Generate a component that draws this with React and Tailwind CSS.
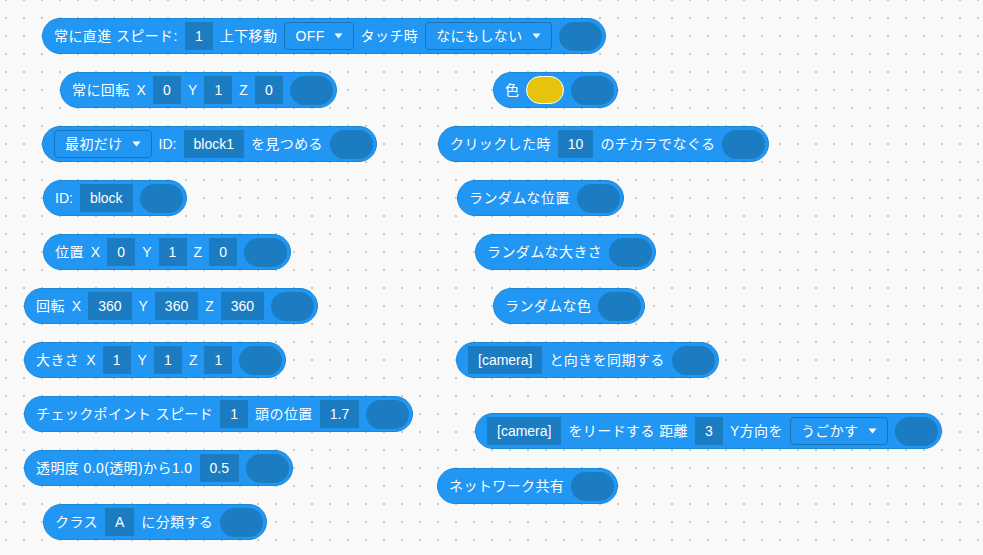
import React from 'react'

// ドロップダウンの小さな三角
function Caret() {
  return (
    <svg width="9" height="6" viewBox="0 0 9 6" className="shrink-0">
      <path d="M0.5 0.5 L8.5 0.5 L4.5 5.5 Z" fill="#ffffff" />
    </svg>
  )
}

// ラベル文字（日本語は少しだけ字間を広げる）
function T({ children }) {
  return <span className="tracking-[0.4px]">{children}</span>
}

function Input({ children }) {
  return (
    <span className="flex h-[28px] min-w-[28px] items-center justify-center bg-[#1b7cc2] px-[10px]">
      {children}
    </span>
  )
}

function Dropdown({ children }) {
  return (
    <span className="flex h-[28px] items-center gap-[9px] rounded-[4px] border border-[#1a74b6] px-[10px]">
      <T>{children}</T>
      <Caret />
    </span>
  )
}

function Toggle() {
  return <span className="ml-auto h-[29px] w-[43px] shrink-0 rounded-full bg-[#1b7cc2]" />
}

function Block({ className, children }) {
  return (
    <div
      className={`absolute flex h-[36px] items-center gap-[7px] whitespace-nowrap rounded-full border border-[#1c88d8] bg-[#2196f3] pl-[11px] pr-[3px] text-[14px] text-white ${className}`}
    >
      {children}
      <Toggle />
    </div>
  )
}

export default function App() {
  return (
    <div
      className="relative h-[555px] w-[983px] overflow-hidden bg-[#f9f9f9] bg-[radial-gradient(circle,#c9c9c9_1px,transparent_1.2px)] bg-[length:18px_18px] bg-[position:-3px_-9px]"
      style={{ fontFamily: '"Liberation Sans", "Noto Sans CJK JP", sans-serif' }}
    >
      {/* 左の列 */}
      <Block className="left-[42px] top-[18px]">
        <T>常に直進 スピード:</T>
        <Input>1</Input>
        <T>上下移動</T>
        <Dropdown>OFF</Dropdown>
        <T>タッチ時</T>
        <Dropdown>なにもしない</Dropdown>
      </Block>

      <Block className="left-[60px] top-[72px]">
        <T>常に回転</T>
        <span>X</span>
        <Input>0</Input>
        <span>Y</span>
        <Input>1</Input>
        <span>Z</span>
        <Input>0</Input>
      </Block>

      <Block className="left-[42px] top-[126px]">
        <Dropdown>最初だけ</Dropdown>
        <span>ID:</span>
        <Input>block1</Input>
        <T>を見つめる</T>
      </Block>

      <Block className="left-[43px] top-[180px]">
        <span>ID:</span>
        <Input>block</Input>
      </Block>

      <Block className="left-[43px] top-[234px]">
        <T>位置</T>
        <span>X</span>
        <Input>0</Input>
        <span>Y</span>
        <Input>1</Input>
        <span>Z</span>
        <Input>0</Input>
      </Block>

      <Block className="left-[24px] top-[288px]">
        <T>回転</T>
        <span>X</span>
        <Input>360</Input>
        <span>Y</span>
        <Input>360</Input>
        <span>Z</span>
        <Input>360</Input>
      </Block>

      <Block className="left-[24px] top-[342px]">
        <T>大きさ</T>
        <span>X</span>
        <Input>1</Input>
        <span>Y</span>
        <Input>1</Input>
        <span>Z</span>
        <Input>1</Input>
      </Block>

      <Block className="left-[24px] top-[396px]">
        <T>チェックポイント スピード</T>
        <Input>1</Input>
        <T>頭の位置</T>
        <Input>1.7</Input>
      </Block>

      <Block className="left-[24px] top-[450px]">
        <T>透明度 0.0(透明)から1.0</T>
        <Input>0.5</Input>
      </Block>

      <Block className="left-[43px] top-[504px]">
        <T>クラス</T>
        <Input>A</Input>
        <T>に分類する</T>
      </Block>

      {/* 右の列 */}
      <Block className="left-[493px] top-[72px]">
        <T>色</T>
        <span className="h-[28px] w-[38px] rounded-full border border-white bg-[#e6c30c]" />
      </Block>

      <Block className="left-[438px] top-[126px]">
        <T>クリックした時</T>
        <Input>10</Input>
        <T>のチカラでなぐる</T>
      </Block>

      <Block className="left-[457px] top-[180px]">
        <T>ランダムな位置</T>
      </Block>

      <Block className="left-[475px] top-[234px]">
        <T>ランダムな大きさ</T>
      </Block>

      <Block className="left-[493px] top-[288px]">
        <T>ランダムな色</T>
      </Block>

      <Block className="left-[456px] top-[342px]">
        <Input>[camera]</Input>
        <T>と向きを同期する</T>
      </Block>

      <Block className="left-[475px] top-[413px]">
        <Input>[camera]</Input>
        <T>をリードする 距離</T>
        <Input>3</Input>
        <T>Y方向を</T>
        <Dropdown>うごかす</Dropdown>
      </Block>

      <Block className="left-[437px] top-[468px]">
        <T>ネットワーク共有</T>
      </Block>
    </div>
  )
}
